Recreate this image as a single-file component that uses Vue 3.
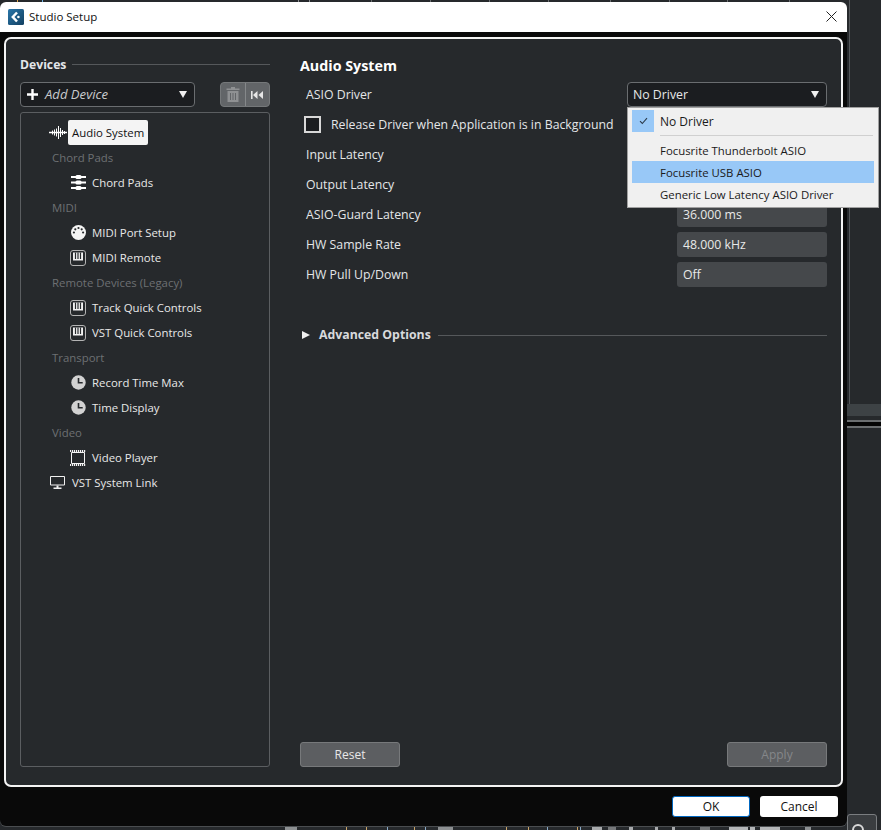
<script setup>
const tree = [
  { label: 'Audio System', icon: 'wave', depth: 1, selected: true },
  { label: 'Chord Pads', group: true },
  { label: 'Chord Pads', icon: 'pads', depth: 2 },
  { label: 'MIDI', group: true },
  { label: 'MIDI Port Setup', icon: 'din', depth: 2 },
  { label: 'MIDI Remote', icon: 'keys', depth: 2 },
  { label: 'Remote Devices (Legacy)', group: true },
  { label: 'Track Quick Controls', icon: 'keys', depth: 2 },
  { label: 'VST Quick Controls', icon: 'keys', depth: 2 },
  { label: 'Transport', group: true },
  { label: 'Record Time Max', icon: 'clock', depth: 2 },
  { label: 'Time Display', icon: 'clock', depth: 2 },
  { label: 'Video', group: true },
  { label: 'Video Player', icon: 'film', depth: 2 },
  { label: 'VST System Link', icon: 'monitor', depth: 1 },
]
const rows = [
  { label: 'Input Latency', value: '' },
  { label: 'Output Latency', value: '' },
  { label: 'ASIO-Guard Latency', value: '36.000 ms' },
  { label: 'HW Sample Rate', value: '48.000 kHz' },
  { label: 'HW Pull Up/Down', value: 'Off' },
]
const menuAfter = ['Focusrite Thunderbolt ASIO', 'Focusrite USB ASIO', 'Generic Low Latency ASIO Driver']

const topTicks = [
  [17, 1, '#d9a24a'], [42, 1, '#6fb0e0'], [298, 1, '#8a8d90'], [309, 1, '#8a8d90'], [371, 1, '#6a6d70'],
  [430, 1, '#6a6d70'], [489, 1, '#6a6d70'], [548, 1, '#6a6d70'], [610, 1, '#6a6d70'], [669, 1, '#6a6d70'],
  [727, 1, '#6a6d70'], [789, 1, '#6a6d70'],
].map(([left, width, background]) => ({ left: left + 'px', width: width + 'px', background }))
const bottomTicks = [
  [285, 12, '#8d9092'], [346, 1, '#c9a468'], [366, 1, '#c9a468'], [387, 1, '#8aa9c4'], [414, 1, '#c9a468'],
  [425, 1, '#8aa9c4'], [438, 15, '#8d9092'], [506, 1, '#c9a468'], [528, 1, '#c9a468'], [547, 1, '#8aa9c4'],
  [577, 1, '#c9a468'], [580, 1, '#8aa9c4'], [592, 10, '#a8aaac'], [608, 8, '#77797b'], [629, 4, '#a8aaac'],
  [655, 3, '#a8aaac'], [672, 3, '#a8aaac'], [700, 10, '#77797b'], [729, 19, '#b4b6b8'], [750, 5, '#b4b6b8'],
  [760, 20, '#b4b6b8'], [805, 6, '#8d9092'],
].map(([left, width, background]) => ({ left: left + 'px', width: width + 'px', background }))
</script>

<template>
  <div class="page">
    <div class="backdrop">
      <span v-for="t in topTicks" :key="'t' + t.left" class="tick top" :style="t"></span>
      <span v-for="t in bottomTicks" :key="'b' + t.left" class="tick bottom" :style="t"></span>
      <div class="bg-vline"></div>
      <div class="bg-band"></div>
      <div class="bg-rule one"></div>
      <div class="bg-rule two"></div>
      <div class="bg-rule three"></div>
      <div class="bg-search"><i></i></div>
    </div>
    <div class="window">
      <div class="titlebar">
        <svg class="logo" width="16" height="16" viewBox="0 0 16 16">
          <defs>
            <linearGradient id="lg" x1="0" y1="0" x2="1" y2="1">
              <stop offset="0" stop-color="#2a77aa" />
              <stop offset="1" stop-color="#123f60" />
            </linearGradient>
          </defs>
          <rect width="16" height="16" rx="1.500" fill="url(#lg)" />
          <path d="M9 3.500 4.800 8 9 12.500" fill="none" stroke="#fff" stroke-width="2.500" />
          <circle cx="10.400" cy="8" r="1.300" fill="#fff" />
        </svg>
        <span class="title">Studio Setup</span>
        <svg class="close" width="11" height="11" viewBox="0 0 11 11">
          <path d="M.5.5l10 10M10.500.5l-10 10" stroke="#222" stroke-width="1" fill="none" />
        </svg>
      </div>
      <div class="body">
        <div class="panel">
          <aside class="left">
            <div class="heading-line">
              <span class="heading">Devices</span>
              <span class="rule"></span>
            </div>
            <div class="device-bar">
              <div class="add-device">
                <svg width="11" height="11" viewBox="0 0 11 11"><path d="M5.500 0v11M0 5.500h11" stroke="#fff" stroke-width="2.400" /></svg>
                <span>Add Device</span>
                <i class="caret"></i>
              </div>
              <div class="tools">
                <div class="tool">
                  <svg width="14" height="15" viewBox="0 0 14 15" fill="#8f9193">
                    <path d="M5 0h4v1.500h4.500V3H.5V1.500H5zM1.500 4h11v11h-11zM4 6v7h1V6zm2.500 0v7h1V6zM9 6v7h1V6z" fill-rule="evenodd" />
                  </svg>
                </div>
                <div class="tool">
                  <svg width="12" height="8" viewBox="0 0 12 8" fill="#e6e6e6">
                    <path d="M0 0h1.600v8H0zM6.500 0v8L2 4zM12 0v8L7.500 4z" />
                  </svg>
                </div>
              </div>
            </div>
            <div class="tree">
              <div v-for="item in tree" :key="item.label + item.depth" class="node" :class="{ group: item.group, d1: item.depth === 1, d2: item.depth === 2 }">
                <span v-if="item.group">{{ item.label }}</span>
                <template v-else>
                  <span class="node-icon" :class="'i-' + item.icon">
                    <svg v-if="item.icon === 'wave'" width="18" height="13" viewBox="0 0 18 13" fill="none" stroke="#fff" stroke-width="1">
                      <path d="M0 6.500h18" stroke-width="1.500" />
                      <path d="M3.500 4.500v4M5.500 3.500v6M7.500 2.500v8M9.500 0v13M11.500 2v9M13.500 4v5M15.500 5v3" />
                    </svg>
                    <svg v-else-if="item.icon === 'pads'" width="15" height="15" viewBox="0 0 15 15" fill="#fff">
                      <rect x="0" y="1" width="15" height="2" /><rect x="0" y="6.500" width="15" height="2" /><rect x="0" y="12" width="15" height="2" />
                      <rect x="4.500" y="0" width="6" height="4" rx="1.500" /><rect x="4.500" y="5.500" width="6" height="4" rx="1.500" /><rect x="4.500" y="11" width="6" height="4" rx="1.500" />
                    </svg>
                    <svg v-else-if="item.icon === 'din'" width="15" height="15" viewBox="0 0 15 15">
                      <circle cx="7.500" cy="7.500" r="7.500" fill="#f4f4f4" />
                      <g fill="#26292c">
                        <circle cx="2.900" cy="7.500" r="1.100" /><circle cx="4.300" cy="4.300" r="1.100" /><circle cx="7.500" cy="3" r="1.100" /><circle cx="10.700" cy="4.300" r="1.100" /><circle cx="12.100" cy="7.500" r="1.100" />
                      </g>
                    </svg>
                    <svg v-else-if="item.icon === 'keys'" width="16" height="16" viewBox="0 0 16 16" fill="none">
                      <rect x=".5" y=".5" width="15" height="15" rx="2.500" stroke="#b4b4b4" />
                      <path d="M3 2.500h10v8H3z" fill="#f2f2f2" />
                      <path d="M5.500 2.500v6.500M8 2.500v6.500M10.500 2.500v6.500" stroke="#26292c" stroke-width="1.200" />
                    </svg>
                    <svg v-else-if="item.icon === 'clock'" width="15" height="15" viewBox="0 0 15 15">
                      <circle cx="7.500" cy="7.500" r="7.200" fill="#d2d2d2" />
                      <path d="M7.500 3v4.800h4.200" fill="none" stroke="#26292c" stroke-width="1.600" />
                    </svg>
                    <svg v-else-if="item.icon === 'film'" width="16" height="16" viewBox="0 0 16 16" fill="none">
                      <path d="M1.500 2.500h13v11h-13z" stroke="#f4f4f4" />
                      <path d="M0 1h16M0 15h16" stroke="#f4f4f4" stroke-width="2" stroke-dasharray="1.200 .8" />
                    </svg>
                    <svg v-else width="15" height="13" viewBox="0 0 15 13">
                      <path d="M.5.500h14v8.500H.5z" fill="#26292c" stroke="#f0f0f0" />
                      <path d="M6.500 9.500h2v2h-2zM3.500 11.500h8V13h-8z" fill="#f0f0f0" />
                    </svg>
                  </span>
                  <span class="node-label" :class="{ selected: item.selected }">{{ item.label }}</span>
                </template>
              </div>
            </div>
          </aside>

          <section class="right">
            <h2 class="section-title">Audio System</h2>
            <div class="form-row">
              <span class="label">ASIO Driver</span>
              <div class="select">
                <span>No Driver</span>
                <i class="caret"></i>
              </div>
            </div>
            <div class="form-row check-row">
              <span class="checkbox"></span>
              <span class="check-label">Release Driver when Application is in Background</span>
            </div>
            <div v-for="r in rows" :key="r.label" class="form-row">
              <span class="label">{{ r.label }}</span>
              <div class="value"><span>{{ r.value }}</span></div>
            </div>
            <div class="advanced">
              <i class="tri"></i>
              <span class="adv-label">Advanced Options</span>
              <span class="rule"></span>
            </div>
            <div class="actions">
              <div class="btn">Reset</div>
              <div class="btn disabled">Apply</div>
            </div>

            <div class="menu">
              <div class="menu-item">
                <span class="check-cell">
                  <svg width="9" height="8" viewBox="0 0 9 8"><path d="M1 4.200 3.300 6.500 8 1.200" fill="none" stroke="#2b3a4a" stroke-width="1.100" /></svg>
                </span>
                <span class="first-label">No Driver</span>
              </div>
              <div class="menu-sep"></div>
              <div v-for="m in menuAfter" :key="m" class="menu-item plain" :class="{ hover: m === 'Focusrite USB ASIO' }">{{ m }}</div>
            </div>
          </section>
        </div>
        <div class="footer">
          <div class="dlg-btn primary">OK</div>
          <div class="dlg-btn">Cancel</div>
        </div>
      </div>
    </div>
  </div>
</template>

<style>
html, body { margin: 0; padding: 0; background: #26292c; }
</style>

<style scoped>
.page {
  position: relative;
  width: 881px;
  height: 830px;
  overflow: hidden;
  background: #26292c;
  font-family: "Open Sans", "Liberation Sans", sans-serif;
  font-size: 12.300px;
  color: #e6e6e6;
}
.backdrop { position: absolute; inset: 0; }
.tick { position: absolute; display: block; }
.tick.top { top: 0; height: 2px; }
.tick.bottom { top: 827px; height: 3px; }
.bg-vline { position: absolute; left: 849px; top: 0; width: 1px; height: 404px; background: #55585b; }
.bg-band { position: absolute; left: 847px; right: 0; top: 404px; height: 12px; background: #3d4245; }
.bg-rule { position: absolute; left: 847px; right: 0; }
.bg-rule.one { top: 420px; height: 2px; background: #6b6e70; }
.bg-rule.two { top: 422px; height: 4px; background: #050505; }
.bg-rule.three { top: 426px; height: 2px; background: #6b6e70; }
.bg-search {
  position: absolute; left: 847px; top: 814px; width: 30px; height: 20px;
  box-sizing: border-box; border: 1px solid #7a7d80; border-radius: 3px; background: #3a3d40;
}
.bg-search i {
  position: absolute; left: 4px; top: 9px; width: 12px; height: 12px;
  box-sizing: border-box; border: 2px solid #d8d8d8; border-radius: 50%;
}
.window {
  position: absolute;
  left: 0; top: 2px;
  width: 847px;
  height: 824px;
  border-radius: 6px;
  background: #090909;
  box-shadow: 0 1px 0 0 #4a4d50;
  display: flex;
  flex-direction: column;
}
.titlebar {
  height: 30px;
  flex: none;
  background: #fff;
  border-radius: 6px 6px 0 0;
  display: flex;
  align-items: center;
  padding: 0 10px 0 8px;
  color: #111;
}
.title { margin-left: 5px; margin-top: -2px; font-size: 11.500px; }
.close { margin-left: auto; margin-top: -1px; }
.logo { flex: none; }
.body { flex: 1; display: flex; flex-direction: column; min-height: 0; }
.panel {
  margin: 5px 4px 0 4px;
  height: 750px;
  flex: none;
  box-sizing: border-box;
  border: 2px solid #f4f4f4;
  border-radius: 7px;
  background: #26292c;
  display: flex;
  padding: 13px 14px 18px 14px;
}
.left { width: 250px; flex: none; display: flex; flex-direction: column; }
.heading-line { display: flex; align-items: center; height: 24px; gap: 6px; }
.heading { font-weight: 700; color: #e4e6ea; font-size: 12.200px; }
.rule { flex: 1; height: 1px; background: #55585b; }
.device-bar { display: flex; justify-content: space-between; margin-top: 6px; }
.add-device {
  width: 175px; height: 25px; box-sizing: border-box;
  border: 1px solid #6a6d70; border-radius: 4px;
  background: #1b1d20;
  display: flex; align-items: center; padding: 0 7px 0 6px;
  font-style: italic; color: #c9cbcd; font-size: 13.100px;
}
.add-device span { margin-left: 7px; margin-top: -2px; }
.add-device .caret { margin-left: auto; }
.caret {
  width: 0; height: 0;
  border-left: 4px solid transparent;
  border-right: 4px solid transparent;
  border-top: 7px solid #f0f0f0;
}
.tools { display: flex; width: 50px; height: 25px; box-sizing: border-box; border: 1px solid #75787a; border-radius: 4px; background: #626568; overflow: hidden; }
.tool { flex: 1; display: flex; align-items: center; justify-content: center; }
.tool + .tool { border-left: 1px solid #85888a; }
.tree {
  margin-top: 5px;
  flex: 1;
  box-sizing: border-box;
  border: 1px solid #5b5e61;
  border-radius: 3px;
  padding: 7px 0 0 0;
  font-size: 11.400px;
}
.node { height: 25px; display: flex; align-items: center; color: #e8e8e8; }
.node.group { padding-left: 31px; color: #6d7073; }
.node.d1 { padding-left: 29px; }
.node.d2 { padding-left: 49px; }
.node-icon { width: 22px; flex: none; display: flex; align-items: center; }
.i-wave { margin-left: -1px; width: 23px; }
.i-clock, .i-din, .i-pads { padding-left: 1px; width: 21px; }
.node-label { white-space: nowrap; }
.node-label.selected {
  background: #f4f4f4; color: #111;
  margin-left: -4px;
  padding: 0 4px; height: 25px; line-height: 25px;
  border-radius: 2px;
  box-sizing: border-box;
}
.right { position: relative; flex: 1; margin-left: 30px; display: flex; flex-direction: column; }
.section-title { margin: 0; font-size: 14.300px; font-weight: 700; color: #fff; height: 30px; line-height: 28px; }
.form-row { display: flex; align-items: center; justify-content: space-between; height: 25px; margin-bottom: 5px; padding-left: 6px; }
.label { color: #e4e6e8; }
.select {
  width: 200px; height: 25px; box-sizing: border-box;
  border: 1px solid #6a6d70; border-radius: 4px; background: #1b1d20;
  display: flex; align-items: center; justify-content: space-between;
  padding: 0 7px 0 5px; color: #e8e8e8;
}
.check-row { justify-content: flex-start; padding-left: 4px; }
.checkbox { width: 17px; height: 17px; box-sizing: border-box; border: 2px solid #d8d8d8; background: #1b1d20; }
.check-label { margin-left: 10px; color: #e4e6e8; }
.value {
  width: 150px; height: 25px; box-sizing: border-box;
  background: #45484b; border-radius: 3px;
  display: flex; align-items: center; padding: 0 6px; color: #e8e8e8;
}
.advanced { display: flex; align-items: center; margin-top: 33px; height: 20px; }
.tri {
  width: 0; height: 0; margin-left: 2px;
  border-top: 4.500px solid transparent;
  border-bottom: 4.500px solid transparent;
  border-left: 8px solid #f0f0f0;
}
.adv-label { margin-left: 9px; margin-right: 7px; margin-top: -1px; font-weight: 700; color: #d8dadc; }
.actions { margin-top: auto; display: flex; justify-content: space-between; font-size: 12px; }
.btn {
  width: 100px; height: 25px; box-sizing: border-box;
  border: 1px solid #77797b; border-radius: 3px; background: #5c5e61;
  color: #e8e8e8; display: flex; align-items: center; justify-content: center;
}
.btn.disabled { color: #85878a; }
.menu {
  position: absolute;
  left: 327px; top: 55px;
  width: 252px; height: 101px;
  box-sizing: border-box;
  background: #f0f0f0;
  border: 1px solid #a0a0a0;
  padding: 2px 4px;
  color: #1a1a1a;
  font-size: 11.400px;
  z-index: 2;
}
.menu-item { display: flex; align-items: center; height: 22px; white-space: nowrap; }
.menu-item.plain { padding-left: 28px; }
.menu-item.hover { background: #98c8f7; }
.first-label { font-size: 12px; }
.check-cell { width: 22px; height: 22px; background: #98c8f7; margin-right: 6px; display: flex; align-items: center; justify-content: center; }
.menu-sep { margin: 3px 1px 3px 28px; height: 1px; background: #d0d0d0; }
.footer { flex: 1; display: flex; justify-content: flex-end; align-items: center; gap: 10px; padding: 0 9px 0 0; font-size: 12px; }
.dlg-btn {
  width: 78px; height: 21px; box-sizing: border-box;
  background: #fff; color: #111; border-radius: 3px;
  display: flex; align-items: center; justify-content: center;
}
.dlg-btn.primary { border: 1px solid #0067c0; }
</style>
